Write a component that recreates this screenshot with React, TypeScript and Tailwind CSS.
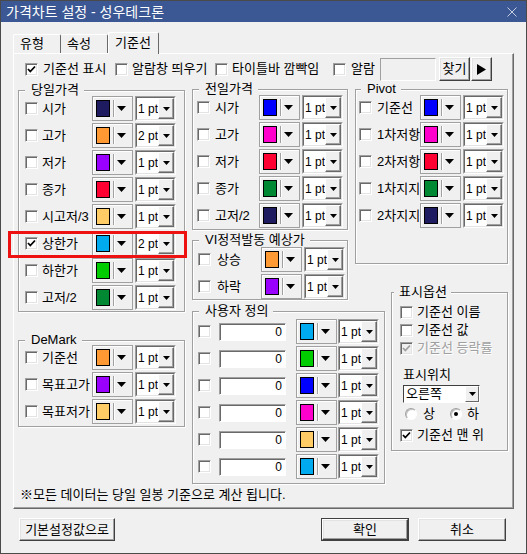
import React from "react";

const FONT = "font-['Liberation_Sans','Noto_Sans_CJK_KR',sans-serif]";

function Tri({ w = 9, h = 5, color = "#000" }: { w?: number; h?: number; color?: string }) {
  return (
    <svg width={w} height={h} viewBox={`0 0 ${w} ${h}`} className="block shrink-0">
      <polygon points={`0,0 ${w},0 ${w / 2},${h}`} fill={color} />
    </svg>
  );
}

function CheckBox({ checked = false, disabled = false }: { checked?: boolean; disabled?: boolean }) {
  return (
    <div
      className={`flex h-[13px] w-[13px] shrink-0 items-center justify-center border border-t-[#a0a0a0] border-l-[#a0a0a0] border-r-white border-b-white shadow-[inset_1px_1px_0_#696969,inset_-1px_-1px_0_#e3e3e3] ${
        disabled ? "bg-[#f0f0f0]" : "bg-white"
      }`}
    >
      {checked && (
        <svg width="9" height="9" viewBox="0 0 9 9" className="block">
          <polyline points="1,4 3.3,6.5 8,1.5" fill="none" stroke={disabled ? "#a0a0a0" : "#000"} strokeWidth="1.8" />
        </svg>
      )}
    </div>
  );
}

function Radio({ on = false }: { on?: boolean }) {
  return (
    <div className="flex h-[12px] w-[12px] shrink-0 items-center justify-center rounded-full border border-t-[#a0a0a0] border-l-[#a0a0a0] border-r-white border-b-white bg-white shadow-[inset_1px_1px_0_#c0c0c0]">
      {on && <div className="h-[4px] w-[4px] rounded-full bg-black" />}
    </div>
  );
}

function ColorCombo({ swatch }: { swatch: string }) {
  return (
    <div className="flex h-[25px] w-[41px] shrink-0 items-center border border-[#a0a0a0] bg-[#f0f0f0] shadow-[inset_1px_1px_0_#fff]">
      <div className={`ml-[3px] h-[17px] w-[14px] shrink-0 border border-black ${swatch}`} />
      <div className="ml-[3px] h-[17px] w-[2px] shrink-0 border-l border-r border-l-[#a0a0a0] border-r-white" />
      <div className="ml-[2px]">
        <Tri />
      </div>
    </div>
  );
}

function PtCombo({ v = "1 pt" }: { v?: string }) {
  return (
    <div className="flex h-[25px] w-[41px] shrink-0 border border-t-[#a0a0a0] border-l-[#a0a0a0] border-r-white border-b-white">
      <div className="flex flex-1 items-center border border-t-[#696969] border-l-[#696969] border-r-[#e3e3e3] border-b-[#e3e3e3] bg-white">
        <span className="whitespace-nowrap pl-[1px] text-[12px] leading-none">{v}</span>
        <div className="ml-auto flex h-full w-[16px] shrink-0 items-center justify-center border border-t-white border-l-white border-r-[#696969] border-b-[#696969] bg-[#f0f0f0] shadow-[inset_-1px_-1px_0_#a0a0a0]">
          <Tri w={7} h={4} />
        </div>
      </div>
    </div>
  );
}

function Group({
  title,
  titleCls,
  className,
  children,
}: {
  title: string;
  titleCls: string;
  className: string;
  children?: React.ReactNode;
}) {
  return (
    <div className={`relative border border-[#a0a0a0] shadow-[inset_1px_1px_0_#fff,1px_1px_0_#fff] ${className}`}>
      <span className={`absolute -top-[8px] whitespace-nowrap bg-[#f0f0f0] leading-[14px] ${titleCls}`}>{title}</span>
      {children}
    </div>
  );
}

type RowData = { label: string; swatch: string; pt?: string; checked?: boolean };

function Row({
  d,
  pad,
  lw,
  children,
}: {
  d: RowData;
  pad: string;
  lw: string;
  children?: React.ReactNode;
}) {
  return (
    <div className={`relative flex h-[27px] items-center ${pad}`}>
      <CheckBox checked={d.checked} />
      <span className={`shrink-0 whitespace-nowrap ${lw}`}>{d.label}</span>
      <ColorCombo swatch={d.swatch} />
      <div className="ml-[2px]">
        <PtCombo v={d.pt ?? "1 pt"} />
      </div>
      {children}
    </div>
  );
}

function Btn({ children, className }: { children: React.ReactNode; className: string }) {
  return (
    <div
      className={`flex items-center justify-center border border-t-white border-l-white border-r-[#404040] border-b-[#404040] bg-[#f0f0f0] shadow-[inset_-1px_-1px_0_#a0a0a0,inset_1px_1px_0_#e3e3e3] ${className}`}
    >
      {children}
    </div>
  );
}

const NAVY = "bg-[#1f1b61]";
const ORANGE = "bg-[#ff9933]";
const PURPLE = "bg-[#9900ff]";
const RED = "bg-[#ff0033]";
const LORANGE = "bg-[#ffcc66]";
const SKY = "bg-[#00aaee]";
const GREEN = "bg-[#00cc00]";
const DGREEN = "bg-[#008833]";
const BLUE = "bg-[#0000ff]";
const MAGENTA = "bg-[#ff00cc]";

const today: RowData[] = [
  { label: "시가", swatch: NAVY },
  { label: "고가", swatch: ORANGE, pt: "2 pt" },
  { label: "저가", swatch: PURPLE },
  { label: "종가", swatch: RED },
  { label: "시고저/3", swatch: LORANGE },
  { label: "상한가", swatch: SKY, pt: "2 pt", checked: true },
  { label: "하한가", swatch: GREEN },
  { label: "고저/2", swatch: DGREEN },
];

const prev: RowData[] = [
  { label: "시가", swatch: BLUE },
  { label: "고가", swatch: MAGENTA },
  { label: "저가", swatch: RED },
  { label: "종가", swatch: DGREEN },
  { label: "고저/2", swatch: NAVY },
];

const vi: RowData[] = [
  { label: "상승", swatch: ORANGE },
  { label: "하락", swatch: PURPLE },
];

const pivot: RowData[] = [
  { label: "기준선", swatch: BLUE },
  { label: "1차저항", swatch: MAGENTA },
  { label: "2차저항", swatch: RED },
  { label: "1차지지", swatch: DGREEN },
  { label: "2차지지", swatch: NAVY },
];

const demark: RowData[] = [
  { label: "기준선", swatch: ORANGE },
  { label: "목표고가", swatch: PURPLE },
  { label: "목표저가", swatch: LORANGE },
];

const user = [SKY, GREEN, BLUE, MAGENTA, LORANGE, SKY];

export default function App() {
  return (
    <div
      className={`flex h-[554px] w-[527px] flex-col overflow-hidden border border-[#4a4a4a] bg-[#f0f0f0] text-[13px] leading-[14px] text-black ${FONT}`}
    >
      {/* Title bar */}
      <div className="flex h-[21px] shrink-0 items-center bg-[#3b5794] pl-[5px] pr-[9px] text-[14px] text-white">
        <span className="whitespace-nowrap">가격차트 설정 - 성우테크론</span>
        <svg width="10" height="10" viewBox="0 0 10 10" className="ml-auto block">
          <path d="M0.5 0.5 L9.5 9.5 M9.5 0.5 L0.5 9.5" stroke="#c5cde0" strokeWidth="1" />
        </svg>
      </div>

      <div className="flex flex-col pl-[12px] pt-[10px]">
        {/* Tabs */}
        <div className="flex h-[21px] items-end">
          <div className="flex h-[19px] w-[48px] items-center justify-start rounded-t-[2px] border-t border-l border-r border-t-white border-l-white border-r-[#696969] pl-[6px]">
            유형
          </div>
          <div className="flex h-[19px] w-[47px] items-center justify-start rounded-t-[2px] border-t border-r border-t-white border-r-[#696969] pl-[6px]">
            속성
          </div>
          <div className="relative z-10 -mb-[1px] flex h-[22px] w-[51px] items-start rounded-t-[2px] border-t border-l border-r border-t-white border-l-white border-r-[#696969] bg-[#f0f0f0] pl-[6px] pt-[3px]">
            기준선
          </div>
        </div>

        {/* Panel */}
        <div className="flex h-[456px] w-[501px] flex-col border border-t-white border-l-white border-r-[#696969] border-b-[#696969] shadow-[inset_-1px_-1px_0_#a0a0a0]">
          {/* Top row */}
          <div className="mt-[3px] flex h-[24px] items-center pl-[11px]">
            <CheckBox checked />
            <span className="ml-[5px] w-[72px] whitespace-nowrap">기준선 표시</span>
            <CheckBox />
            <span className="ml-[4px] w-[83px] whitespace-nowrap">알람창 띄우기</span>
            <CheckBox />
            <span className="ml-[4px] w-[101px] whitespace-nowrap">타이틀바 깜빡임</span>
            <CheckBox />
            <span className="ml-[5px] w-[29px] whitespace-nowrap">알람</span>
            <div className="h-[23px] w-[56px] border border-t-[#a0a0a0] border-l-[#a0a0a0] border-r-white border-b-white bg-[#f0f0f0]" />
            <Btn className="ml-[3px] h-[24px] w-[31px]">찾기</Btn>
            <Btn className="ml-[1px] h-[24px] w-[21px]">
              <svg width="9" height="11" viewBox="0 0 9 11" className="block">
                <polygon points="0,0 9,5.5 0,11" fill="#000" />
              </svg>
            </Btn>
          </div>

          {/* Content */}
          <div className="mt-[8px] flex items-start pl-[4px]">
            {/* Left column */}
            <div className="flex w-[167px] flex-col pt-[1px]">
              <Group title="당일가격" titleCls="left-[6px] pl-[6px] pr-[5px]" className="h-[222px]">
                <div className="flex flex-col pt-[4px]">
                  {today.map((d, i) => (
                    <Row key={i} d={d} pad="pl-[6px]" lw="ml-[4px] w-[50px]">
                      {d.checked && (
                        <div className="absolute -left-[11px] -right-[3px] top-[1px] -bottom-[1px] border-[3px] border-[#ee1111]" />
                      )}
                    </Row>
                  ))}
                </div>
              </Group>
              <Group title="DeMark" titleCls="left-[6px] pl-[6px] pr-[5px]" className="mt-[28px] h-[87px]">
                <div className="flex flex-col pt-[3px]">
                  {demark.map((d, i) => (
                    <Row key={i} d={d} pad="pl-[6px]" lw="ml-[4px] w-[50px]" />
                  ))}
                </div>
              </Group>
            </div>

            {/* Right area */}
            <div className="ml-[7px] grid grid-cols-[156px_7px_30px_6px_117px] grid-rows-[141px_10px_24px_28px_8px_11px_140px_33px]">
              <Group title="전일가격" titleCls="left-[6px] pl-[6px] pr-[5px]" className="col-start-1 row-start-1">
                <div className="flex flex-col pt-[4px]">
                  {prev.map((d, i) => (
                    <Row key={i} d={d} pad="pl-[4px]" lw="ml-[5px] w-[44px]" />
                  ))}
                </div>
              </Group>

              <Group
                title="VI정적발동 예상가"
                titleCls="left-[6px] pl-[6px] pr-[5px]"
                className="col-start-1 row-span-3 row-start-3"
              >
                <div className="flex flex-col pt-[5px]">
                  {vi.map((d, i) => (
                    <Row key={i} d={d} pad="pl-[5px]" lw="ml-[6px] w-[44px]" />
                  ))}
                </div>
              </Group>

              <Group
                title="Pivot"
                titleCls="left-[5px] pl-[6px] pr-[5px]"
                className="col-span-3 col-start-3 row-span-3 row-start-1"
              >
                <div className="flex flex-col pt-[4px]">
                  {pivot.map((d, i) => (
                    <Row key={i} d={d} pad="pl-[3px]" lw="ml-[5px] w-[43px]" />
                  ))}
                </div>
              </Group>

              <Group
                title="사용자 정의"
                titleCls="left-[6px] pl-[6px] pr-[5px]"
                className="col-span-3 col-start-1 row-span-2 row-start-7"
              >
                <div className="flex flex-col pt-[6px]">
                  {user.map((s, i) => (
                    <div key={i} className="flex h-[27px] items-center pl-[5px]">
                      <CheckBox />
                      <div className="ml-[8px] flex h-[18px] w-[67px] shrink-0 items-center justify-end border border-t-[#a0a0a0] border-l-[#a0a0a0] border-r-white border-b-white bg-white pr-[3px] text-[12px] shadow-[inset_1px_1px_0_#696969]">
                        0
                      </div>
                      <div className="ml-[10px]">
                        <ColorCombo swatch={s} />
                      </div>
                      <div className="ml-[1px]">
                        <PtCombo />
                      </div>
                    </div>
                  ))}
                </div>
              </Group>

              <Group
                title="표시옵션"
                titleCls="left-[2px] pl-[5px] pr-[4px]"
                className="col-start-5 row-span-3 row-start-5"
              >
                <div className="flex flex-col pl-[8px] pt-[10px]">
                  <div className="flex h-[18px] items-center">
                    <CheckBox />
                    <span className="ml-[4px] whitespace-nowrap">기준선 이름</span>
                  </div>
                  <div className="flex h-[18px] items-center">
                    <CheckBox />
                    <span className="ml-[4px] whitespace-nowrap">기준선 값</span>
                  </div>
                  <div className="flex h-[18px] items-center">
                    <CheckBox checked disabled />
                    <span className="ml-[4px] whitespace-nowrap text-[#a0a0a0] [text-shadow:1px_1px_0_#fff]">기준선 등락률</span>
                  </div>
                  <div className="ml-[3px] mt-[11px] h-[14px] whitespace-nowrap">표시위치</div>
                  <div className="ml-[3px] mt-[3px] flex h-[18px] w-[77px] items-center border border-t-[#404040] border-l-[#404040] border-r-white border-b-white bg-white">
                    <span className="whitespace-nowrap pl-[2px]">오른쪽</span>
                    <div className="ml-auto flex h-full w-[14px] items-center justify-center border border-t-white border-l-white border-r-[#696969] border-b-[#696969] bg-[#f0f0f0]">
                      <Tri w={7} h={4} />
                    </div>
                  </div>
                  <div className="mt-[3px] flex h-[16px] items-center pl-[5px]">
                    <Radio />
                    <span className="ml-[6px] w-[27px]">상</span>
                    <Radio on />
                    <span className="ml-[5px]">하</span>
                  </div>
                  <div className="mt-[4px] flex h-[18px] items-center">
                    <CheckBox checked />
                    <span className="ml-[4px] whitespace-nowrap">기준선 맨 위</span>
                  </div>
                </div>
              </Group>
            </div>
          </div>

          <div className="mt-[4px] h-[14px] whitespace-nowrap pl-[6px]">※모든 데이터는 당일 일봉 기준으로 계산 됩니다.</div>
        </div>

        {/* Bottom buttons */}
        <div className="mt-[9px] flex h-[23px] items-center">
          <Btn className="ml-[6px] h-[23px] w-[96px]">기본설정값으로</Btn>
          <div className="ml-[206px] flex h-[23px] w-[88px] border border-[#404040]">
            <Btn className="h-full w-full">확인</Btn>
          </div>
          <Btn className="ml-[9px] h-[23px] w-[88px]">취소</Btn>
        </div>
      </div>
    </div>
  );
}
